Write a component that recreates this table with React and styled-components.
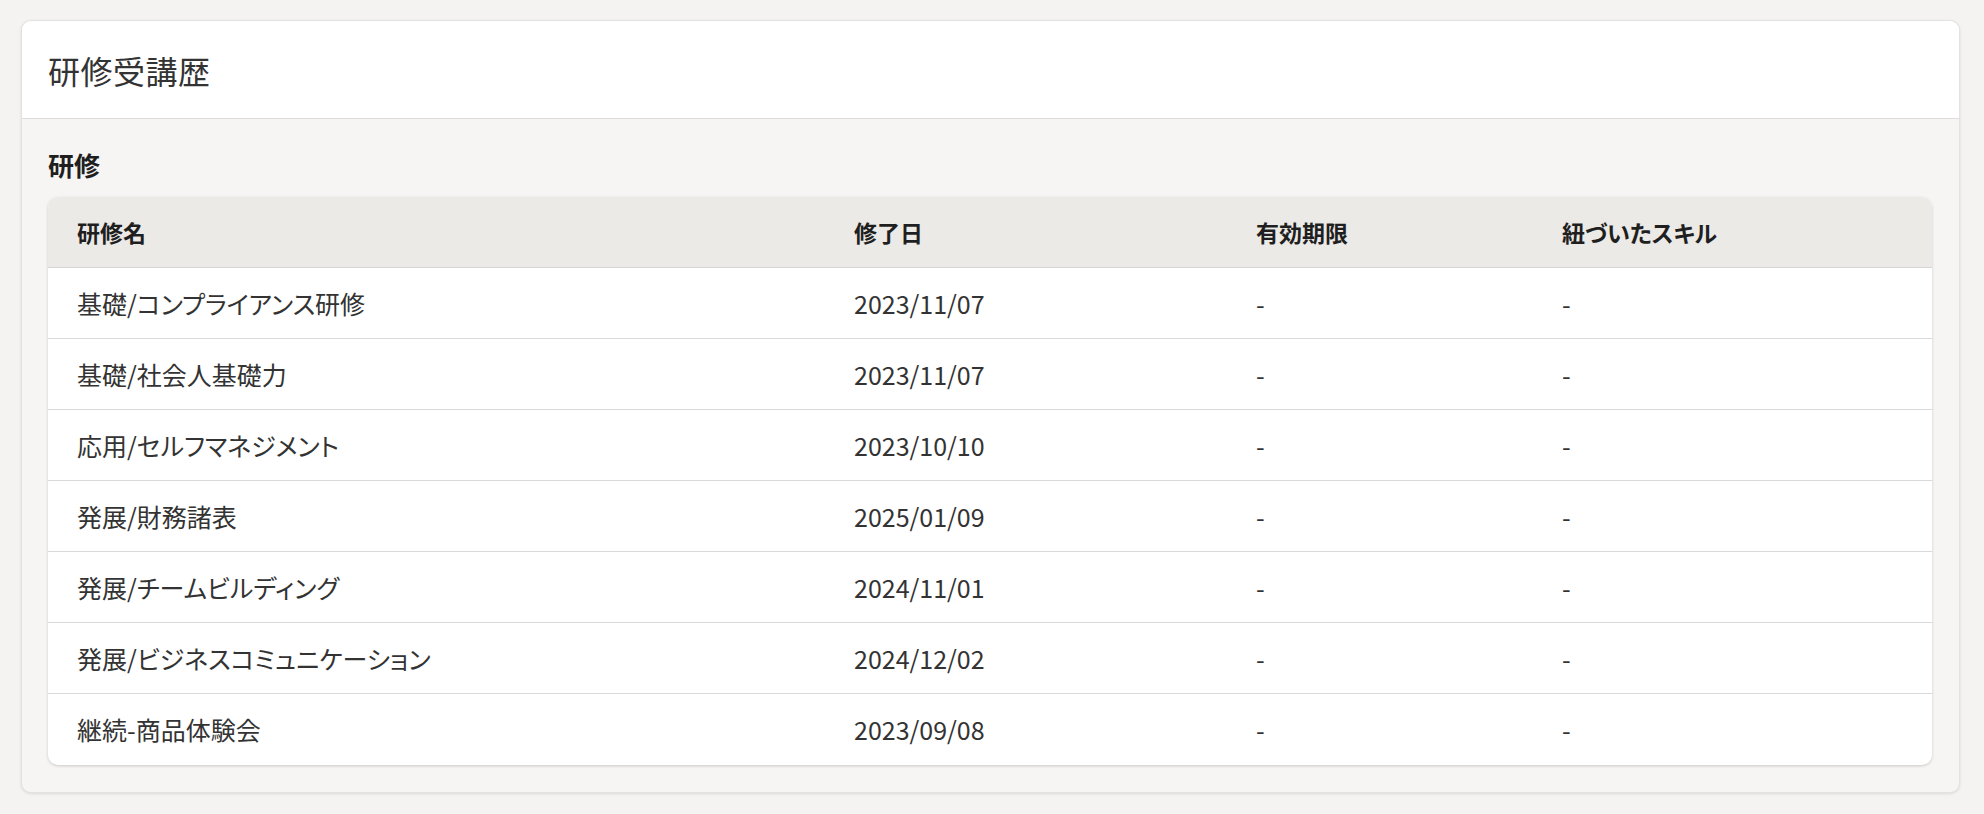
import React from 'react';
import styled, { createGlobalStyle } from 'styled-components';

const GlobalStyle = createGlobalStyle`
  html, body {
    margin: 0;
    padding: 0;
    background: #f4f3f1;
  }
  body {
    font-family: "Noto Sans CJK JP", "Noto Sans", sans-serif;
    font-feature-settings: "palt";
    color: #333;
  }
`;

const trainings = [
  { name: '基礎/コンプライアンス研修', completed: '2023/11/07', expires: '-', skills: '-' },
  { name: '基礎/社会人基礎力', completed: '2023/11/07', expires: '-', skills: '-' },
  { name: '応用/セルフマネジメント', completed: '2023/10/10', expires: '-', skills: '-' },
  { name: '発展/財務諸表', completed: '2025/01/09', expires: '-', skills: '-' },
  { name: '発展/チームビルディング', completed: '2024/11/01', expires: '-', skills: '-' },
  { name: '発展/ビジネスコミュニケーション', completed: '2024/12/02', expires: '-', skills: '-' },
  { name: '継続-商品体験会', completed: '2023/09/08', expires: '-', skills: '-' },
];

const columns = [
  { key: 'name', label: '研修名', width: 777 },
  { key: 'completed', label: '修了日', width: 402 },
  { key: 'expires', label: '有効期限', width: 306 },
  { key: 'skills', label: '紐づいたスキル', width: 399 },
];

const Page = styled.div`
  padding: 20px 24px 22px 21px;
`;

const Card = styled.section`
  background: #f6f5f3;
  border: 1px solid #e3e2df;
  border-radius: 10px;
  box-shadow: 0 1px 3px rgba(0, 0, 0, 0.1);
  overflow: hidden;
`;

const CardHeader = styled.header`
  display: flex;
  align-items: center;
  height: 97px;
  padding: 0 26px;
  background: #fff;
  border-bottom: 1px solid #dddcda;
`;

const Title = styled.h1`
  margin: 0;
  font-size: 32px;
  font-weight: 400;
  color: #333;
  letter-spacing: 0.5px;
`;

const CardBody = styled.div`
  padding: 0 27px 27px 26px;
`;

const SectionLabel = styled.h2`
  margin: 28px 0 14px;
  height: 36px;
  line-height: 36px;
  font-size: 26px;
  font-weight: 700;
  color: #1f1f1f;
`;

const Table = styled.table`
  width: 100%;
  table-layout: fixed;
  border-collapse: separate;
  border-spacing: 0;
  background: #fff;
  border-radius: 10px;
  overflow: hidden;
  box-shadow: 0 1px 3px rgba(0, 0, 0, 0.18);
`;

const Col = styled.col`
  width: ${(p) => p.$width}px;
`;

const HeadCell = styled.th`
  height: 70px;
  padding: 0 0 0 29px;
  text-align: left;
  font-size: 23px;
  font-weight: 700;
  color: #1f1f1f;
  background: #ebeae7;
  border-bottom: 1px solid #d6d5d3;
`;

const Cell = styled.td`
  height: 70px;
  padding: 0 0 0 29px;
  font-size: 25px;
  color: #333;
  white-space: nowrap;
  border-bottom: 1px solid ${(p) => (p.$last ? 'transparent' : '#d9d9d9')};
`;

export default function App() {
  return (
    <>
      <GlobalStyle />
      <Page>
        <Card>
          <CardHeader>
            <Title>研修受講歴</Title>
          </CardHeader>
          <CardBody>
            <SectionLabel>研修</SectionLabel>
            <Table>
              <colgroup>
                {columns.map((c) => <Col key={c.key} $width={c.width} />)}
              </colgroup>
              <thead>
                <tr>
                  {columns.map((c) => <HeadCell key={c.key}>{c.label}</HeadCell>)}
                </tr>
              </thead>
              <tbody>
                {trainings.map((t, i) => (
                  <tr key={t.name}>
                    {columns.map((c) => (
                      <Cell key={c.key} $last={i === trainings.length - 1}>{t[c.key]}</Cell>
                    ))}
                  </tr>
                ))}
              </tbody>
            </Table>
          </CardBody>
        </Card>
      </Page>
    </>
  );
}
